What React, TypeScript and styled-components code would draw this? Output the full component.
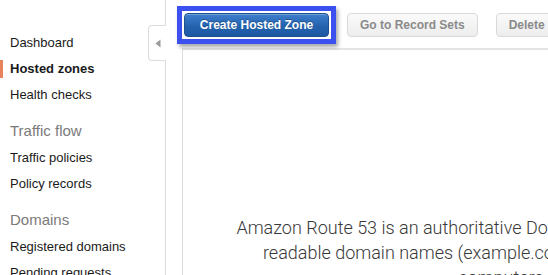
import React from "react";
import styled, { createGlobalStyle } from "styled-components";

const Global = createGlobalStyle`
  html, body { margin: 0; padding: 0; background: #fff; }
  body {
    width: 548px; height: 275px; overflow: hidden;
    font-family: "Liberation Sans", Arial, Helvetica, sans-serif;
    -webkit-font-smoothing: antialiased;
  }
`;

const Page = styled.div`
  display: flex;
  width: 548px;
  height: 275px;
  overflow: hidden;
`;

const Sidebar = styled.nav`
  position: relative;
  flex: 0 0 165px;
  border-right: 1px solid #dcdcdc;
  padding-top: 30px;
  box-sizing: content-box;
`;

const NavItem = styled.div<{ $active?: boolean }>`
  position: relative;
  height: 26px;
  line-height: 26px;
  padding-left: 10px;
  font-size: 13px;
  color: #1a1a1a;
  font-weight: ${(p) => (p.$active ? 700 : 400)};
  white-space: nowrap;
  &::before {
    content: "";
    display: ${(p) => (p.$active ? "block" : "none")};
    position: absolute;
    left: 0;
    top: 4px;
    width: 3px;
    height: 18px;
    background: #e8845c;
  }
`;

const NavHeading = styled.div`
  padding: 10px 0 1px 10px;
  line-height: 26px;
  font-size: 15px;
  color: #7a7a7a;
  white-space: nowrap;
`;

const CollapseTab = styled.div`
  position: absolute;
  top: 25px;
  right: -1px;
  width: 17px;
  height: 34px;
  background: #fff;
  border: 1px solid #dcdcdc;
  border-right: none;
  border-radius: 4px 0 0 4px;
  display: flex;
  align-items: center;
  justify-content: center;
`;

const Main = styled.main`
  flex: 0 0 auto;
  display: flex;
  flex-direction: column;
`;

const Toolbar = styled.div`
  height: 48px;
  display: flex;
  align-items: flex-start;
  gap: 18px;
  padding: 13px 0 0 18px;
  box-sizing: border-box;
`;

const PrimaryButton = styled.button`
  position: relative;
  flex: 0 0 auto;
  width: 145px;
  height: 24px;
  border: 1px solid #1c4f8e;
  border-radius: 4px;
  background: linear-gradient(#3f80cc, #2462ae 55%, #1d58a2);
  color: #fff;
  font-family: inherit;
  font-size: 12px;
  font-weight: 700;
  text-shadow: 0 -1px 0 rgba(0, 0, 0, 0.25);
  padding: 0;
  box-shadow: inset 0 1px 0 rgba(255, 255, 255, 0.25);
  &::after {
    content: "";
    position: absolute;
    left: -8px;
    top: -8px;
    right: -8px;
    bottom: -8px;
    border: 5px solid #3c50f0;
    box-shadow: 2px 3px 4px rgba(0, 0, 0, 0.35);
    pointer-events: none;
  }
`;

const SecondaryButton = styled.button`
  flex: 0 0 auto;
  height: 24px;
  border: 1px solid #d9d9d9;
  border-radius: 4px;
  background: linear-gradient(#fafafa, #ededed);
  color: #8a8a8a;
  font-family: inherit;
  font-size: 12px;
  font-weight: 700;
  padding: 0 12px;
  white-space: nowrap;
`;

const Panel = styled.section`
  margin-left: 16px;
  width: 1000px;
  height: 227px;
  border-left: 1px solid #dcdcdc;
  border-top: 2px solid #e4e4e4;
  box-sizing: border-box;
  padding-top: 165px;
`;

const Intro = styled.p`
  margin: 0;
  width: 868px;
  text-align: center;
  font-family: Roboto, "Liberation Sans", sans-serif;
  font-size: 18px;
  line-height: 25px;
  color: #383838;
  font-weight: 300;
  white-space: nowrap;
`;

const Arrow = () => (
  <svg width="6" height="9" viewBox="0 0 6 9">
    <path d="M5.5 0.5 L0.5 4.5 L5.5 8.5 Z" fill="#9a9a9a" />
  </svg>
);

export default function App() {
  return (
    <>
      <Global />
      <Page>
        <Sidebar>
          <NavItem>Dashboard</NavItem>
          <NavItem $active>Hosted zones</NavItem>
          <NavItem>Health checks</NavItem>
          <NavHeading>Traffic flow</NavHeading>
          <NavItem>Traffic policies</NavItem>
          <NavItem>Policy records</NavItem>
          <NavHeading>Domains</NavHeading>
          <NavItem>Registered domains</NavItem>
          <NavItem>Pending requests</NavItem>
          <CollapseTab>
            <Arrow />
          </CollapseTab>
        </Sidebar>
        <Main>
          <Toolbar>
            <PrimaryButton>Create Hosted Zone</PrimaryButton>
            <SecondaryButton>Go to Record Sets</SecondaryButton>
            <SecondaryButton>Delete Hosted Zone</SecondaryButton>
          </Toolbar>
          <Panel>
            <Intro>
              Amazon Route 53 is an authoritative Domain Name System (DNS) service that translates human-
              <br />
              readable domain names (example.com) into the numerical IP addresses like 192.0.2.1 that
              <br />
              computers use to connect to each other.
            </Intro>
          </Panel>
        </Main>
      </Page>
    </>
  );
}
